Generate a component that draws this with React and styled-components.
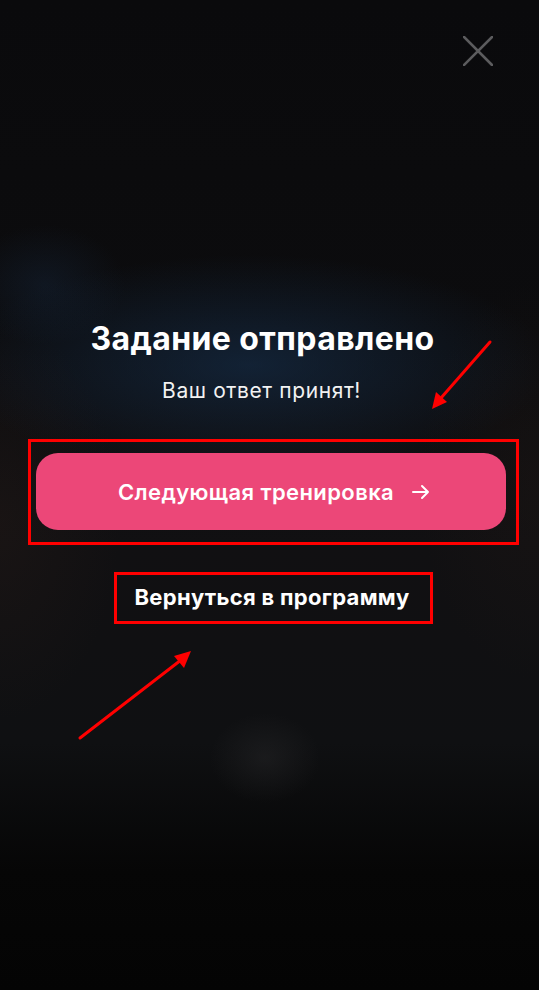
import styled, { createGlobalStyle } from "styled-components";

const GlobalStyle = createGlobalStyle`
  html, body {
    margin: 0;
    padding: 0;
    background: #070708;
  }
  * {
    box-sizing: border-box;
  }
`;

export default function App() {
  return (
    <>
      <GlobalStyle />
      <Screen>
        <TopBar>
          <CloseButton aria-label="Закрыть">
            <svg viewBox="0 0 30 30" width="30" height="30">
              <path d="M1 1L29 29M29 1L1 29" stroke="#5c5c5e" strokeWidth="2.6" strokeLinecap="square" />
            </svg>
          </CloseButton>
        </TopBar>

        <Content>
          <Title>Задание отправлено</Title>
          <Subtitle>Ваш ответ принят!</Subtitle>

          <MarkBox $wide>
            <PrimaryButton>
              Следующая тренировка
              <ArrowIcon viewBox="0 0 18 16" aria-hidden="true">
                <path d="M1 8h15M10 2l6 6-6 6" fill="none" stroke="#fff" strokeWidth="2" strokeLinecap="round" strokeLinejoin="round" />
              </ArrowIcon>
            </PrimaryButton>
          </MarkBox>

          <MarkBox>
            <LinkButton>Вернуться в программу</LinkButton>
          </MarkBox>
        </Content>

        <Annotations viewBox="0 0 539 990" aria-hidden="true">
          <line x1="490" y1="342" x2="441" y2="398" stroke="#ff0000" strokeWidth="3" strokeLinecap="round" />
          <polygon points="432,409 436,392 447,402" fill="#ff0000" />
          <line x1="80" y1="738" x2="181" y2="660" stroke="#ff0000" strokeWidth="3" strokeLinecap="round" />
          <polygon points="191,651 174,656 184,668" fill="#ff0000" />
        </Annotations>
      </Screen>
    </>
  );
}

const Screen = styled.div`
  position: relative;
  width: 539px;
  min-height: 990px;
  overflow: hidden;
  font-family: Inter, "Noto Sans", sans-serif;
  color: #fff;
  background:
    radial-gradient(ellipse 55px 45px at 265px 758px, rgba(44, 44, 46, 0.4), transparent),
    radial-gradient(ellipse 300px 110px at 250px 365px, rgba(22, 48, 78, 0.6), transparent),
    radial-gradient(ellipse 80px 60px at 45px 285px, rgba(24, 44, 70, 0.35), transparent),
    radial-gradient(ellipse 120px 200px at 0px 520px, rgba(40, 28, 24, 0.35), transparent),
    radial-gradient(ellipse 120px 200px at 539px 480px, rgba(36, 26, 22, 0.3), transparent),
    linear-gradient(
      180deg,
      #0a0a0c 0%,
      #0c0c0e 35%,
      #111012 55%,
      #0f1012 75%,
      #060606 88%,
      #040404 100%
    );
`;

const TopBar = styled.div`
  display: flex;
  justify-content: flex-end;
  padding: 36px 46px 0 0;
`;

const CloseButton = styled.button`
  display: flex;
  width: 30px;
  height: 30px;
  padding: 0;
  border: none;
  background: none;
  cursor: pointer;
`;

const Content = styled.div`
  display: flex;
  flex-direction: column;
  align-items: center;
  padding-top: 254px;
`;

const Title = styled.h1`
  margin: 0 14px 0 0;
  font-size: 32px;
  line-height: 38px;
  font-weight: 700;
  letter-spacing: 0.4px;
`;

const Subtitle = styled.p`
  margin: 20px 16px 0 0;
  font-size: 21px;
  line-height: 26px;
  font-weight: 400;
  letter-spacing: 0.6px;
  color: #f2f2f2;
`;

const MarkBox = styled.div`
  display: flex;
  border: 3px solid #ff0000;
  margin-top: ${(p) => (p.$wide ? "35px" : "27px")};
  padding: ${(p) => (p.$wide ? "11px 10px 12px 5px" : "8px 20px 10px 17px")};
  width: ${(p) => (p.$wide ? "491px" : "auto")};
  margin-left: ${(p) => (p.$wide ? "8px" : "8px")};
`;

const PrimaryButton = styled.button`
  display: flex;
  align-items: center;
  justify-content: center;
  gap: 18px;
  width: 100%;
  height: 77px;
  border: none;
  border-radius: 22px;
  background: #ec4778;
  color: #fff;
  font-family: inherit;
  font-size: 22px;
  font-weight: 600;
  letter-spacing: 0.4px;
  padding: 0 0 0 6px;
  cursor: pointer;
`;

const ArrowIcon = styled.svg`
  width: 18px;
  height: 16px;
`;

const LinkButton = styled.button`
  border: none;
  background: none;
  padding: 0;
  color: #fff;
  font-family: inherit;
  font-size: 22px;
  line-height: 28px;
  font-weight: 700;
  letter-spacing: 0.3px;
  cursor: pointer;
`;

const Annotations = styled.svg`
  position: absolute;
  inset: 0;
  width: 539px;
  height: 990px;
  pointer-events: none;
`;
